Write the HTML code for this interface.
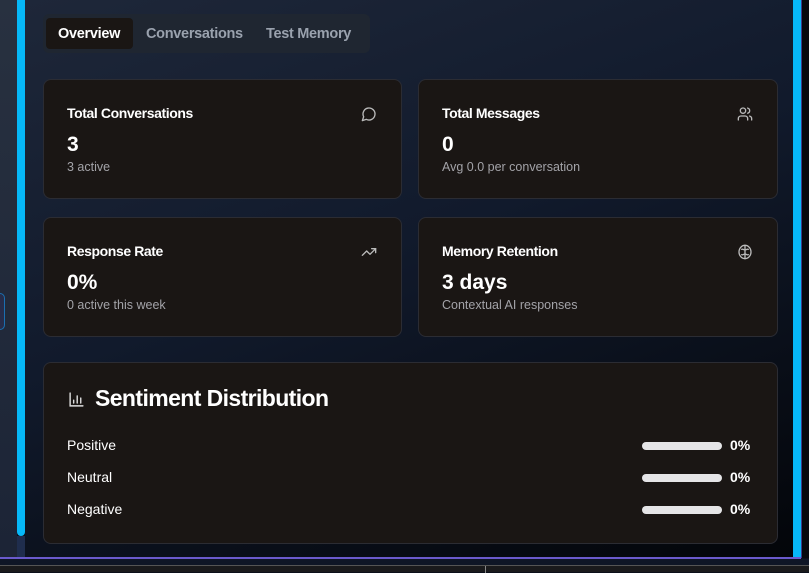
<!DOCTYPE html>
<html><head><style>
*{box-sizing:border-box;margin:0;padding:0}
body{width:809px;height:572px;overflow:hidden;background:#0b0f1a;font-family:"Liberation Sans",sans-serif;position:relative}
.left{position:absolute;left:0;top:0;width:17px;height:558px;background:linear-gradient(180deg,#283140,#1c2436)}
.lbtn{position:absolute;left:-8px;top:293px;width:13px;height:37px;border:1px solid #1b6fb0;border-radius:5px;background:#272d4a}
.cbar{position:absolute;left:17px;top:0;width:8px;height:536px;background:#06b8f8;border-radius:0 0 4px 4px}
.cbar2{position:absolute;left:17px;top:536px;width:8px;height:22px;background:#1f2d4d}
.main{position:absolute;left:25px;top:0;width:768px;height:558px;background:linear-gradient(160deg,#1e2739 0%,#111a2c 45%,#030509 100%)}
.rbar{position:absolute;left:793px;top:0;width:8px;height:558px;background:#06b8f8}
.redge{position:absolute;left:801px;top:0;width:8px;height:558px;background:#06080d;border-left:1px solid #3b3b8a}
.bline{position:absolute;left:0;top:557px;width:801px;height:2px;background:#6a5acd}
.b1{position:absolute;left:0;top:559px;width:809px;height:6px;background:#0f1626}
.b2{position:absolute;left:0;top:565px;width:809px;height:7px;background:#1a1a1c;border-top:1px solid #555}
.b2 i{position:absolute;left:485px;top:0;width:1px;height:7px;background:#888}
.tabs{position:absolute;left:43px;top:14px;width:327px;height:39px;background:#1f2631;border-radius:6px}
.tab{position:absolute;top:4px;height:31px;line-height:33px;font-size:14.5px;color:#9aa2ae;font-weight:bold;letter-spacing:-0.3px}
.tab.on{background:#1a1614;color:#fff;border-radius:4px;padding:0 12px;left:3px;width:87px}
.card{position:absolute;background:#1a1614;border:1px solid #2b2c33;border-radius:8px}
.t{position:absolute;left:23px;top:25px;font-size:14px;font-weight:bold;color:#fff;letter-spacing:-0.4px}
.v{position:absolute;left:23px;top:53px;font-size:21px;font-weight:bold;color:#fff}
.s{position:absolute;left:23px;top:80px;font-size:12.5px;color:#a3a3a8}
.ic{position:absolute;right:24px;top:26px;width:16px;height:16px}
.row{position:absolute;left:23px;font-size:14px;color:#fff;width:686px}
.bar{position:absolute;left:575px;top:5px;width:80px;height:8px;border-radius:4px;background:#e5e5e7}
.pc{position:absolute;left:663px;top:0;font-weight:bold}
</style></head><body>
<div class="left"></div><div class="lbtn"></div>
<div class="main"></div>
<div class="cbar"></div><div class="cbar2"></div>
<div class="rbar"></div><div class="redge"></div>
<div class="bline"></div><div class="b1"></div><div class="b2"><i></i></div>
<div class="tabs">
<div class="tab on">Overview</div>
<div class="tab" style="left:103px">Conversations</div>
<div class="tab" style="left:223px">Test Memory</div>
</div>
<div class="card" style="left:43px;top:79px;width:359px;height:120px">
<div class="t">Total Conversations</div><div class="v">3</div><div class="s">3 active</div>
<svg class="ic" viewBox="0 0 24 24" fill="none" stroke="#bbb" stroke-width="2" stroke-linecap="round" stroke-linejoin="round"><path d="M7.9 20A9 9 0 1 0 4 16.1L2 22Z"/></svg>
</div>
<div class="card" style="left:418px;top:79px;width:360px;height:120px">
<div class="t">Total Messages</div><div class="v">0</div><div class="s">Avg 0.0 per conversation</div>
<svg class="ic" viewBox="0 0 24 24" fill="none" stroke="#bbb" stroke-width="2" stroke-linecap="round"><path d="M16 21v-2a4 4 0 0 0-4-4H6a4 4 0 0 0-4 4v2"/><circle cx="9" cy="7" r="4"/><path d="M22 21v-2a4 4 0 0 0-3-3.87M16 3.13a4 4 0 0 1 0 7.75"/></svg>
</div>
<div class="card" style="left:43px;top:217px;width:359px;height:120px">
<div class="t">Response Rate</div><div class="v">0%</div><div class="s">0 active this week</div>
<svg class="ic" viewBox="0 0 24 24" fill="none" stroke="#bbb" stroke-width="2" stroke-linecap="round" stroke-linejoin="round"><path d="M22 7l-8.5 8.5-5-5L2 17"/><path d="M16 7h6v6"/></svg>
</div>
<div class="card" style="left:418px;top:217px;width:360px;height:120px">
<div class="t">Memory Retention</div><div class="v">3 days</div><div class="s">Contextual AI responses</div>
<svg class="ic" viewBox="0 0 24 24" fill="none" stroke="#bbb" stroke-width="2" stroke-linecap="round"><ellipse cx="12" cy="12" rx="9" ry="10"/><path d="M12 2v20M12 9c-2 0-3-2-5-1M12 15c-2 0-3 2-5 1M12 9c2 0 3-2 5-1M12 15c2 0 3 2 5 1"/></svg>
</div>
<div class="card" style="left:43px;top:362px;width:735px;height:182px">
<svg style="position:absolute;left:24px;top:28px" width="17" height="17" viewBox="0 0 24 24" fill="none" stroke="#ddd" stroke-width="2" stroke-linecap="round"><path d="M3 3v18h18M8 17v-4M13 17V7M18 17v-7"/></svg>
<div style="position:absolute;left:51px;top:22px;font-size:23px;font-weight:bold;color:#fff;letter-spacing:-0.6px">Sentiment Distribution</div>
<div class="row" style="top:74px">Positive<div class="bar"></div><div class="pc">0%</div></div>
<div class="row" style="top:106px">Neutral<div class="bar"></div><div class="pc">0%</div></div>
<div class="row" style="top:138px">Negative<div class="bar"></div><div class="pc">0%</div></div>
</div>
</body></html>
